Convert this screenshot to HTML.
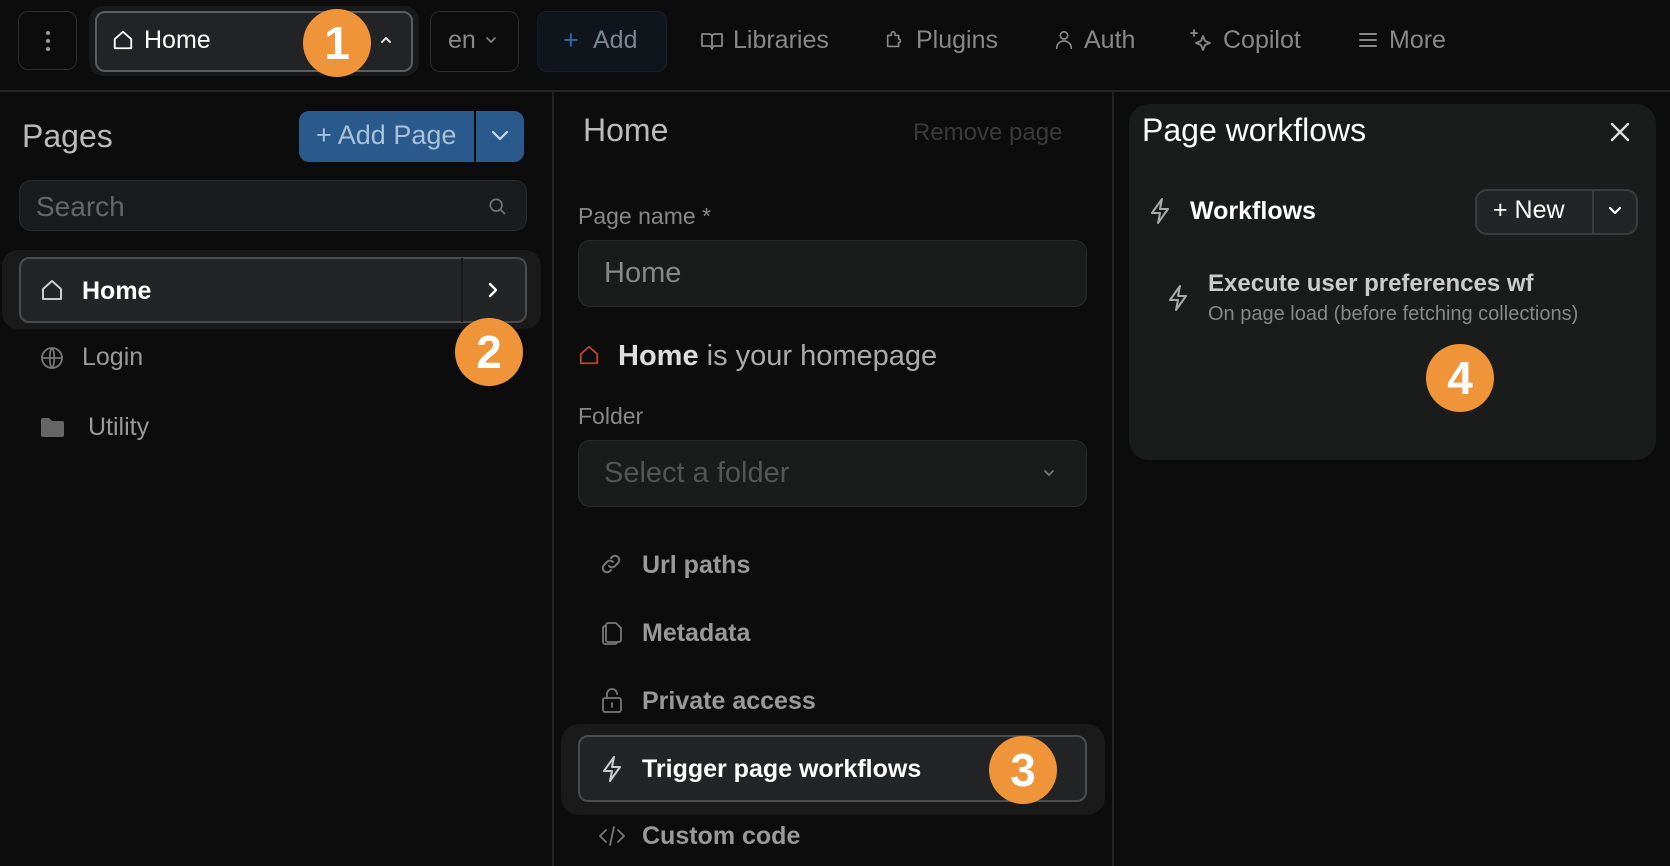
<!DOCTYPE html>
<html><head><meta charset="utf-8"><style>
*{box-sizing:border-box;margin:0;padding:0}
body{width:1670px;height:866px;background:#0c0c0c;font-family:"Liberation Sans",sans-serif;position:relative;overflow:hidden;color:#999}
.a{position:absolute}
.t{position:absolute;white-space:nowrap;line-height:1}
svg{position:absolute;fill:none;stroke-linecap:round;stroke-linejoin:round}
.badge{position:absolute;width:68px;height:68px;border-radius:50%;background:#f0943a;color:#fff;font-weight:bold;font-size:46px;text-align:center;line-height:68px;margin:-34px 0 0 -34px}
</style></head><body>
<!-- top bar -->
<div class="a" style="left:0;top:90px;width:1670px;height:2px;background:#262626"></div>
<div class="a" style="left:18px;top:11px;width:59px;height:59px;border:1.5px solid #2c2c2c;border-radius:10px"></div>
<div class="a" style="left:46px;top:31px;width:4px;height:4px;border-radius:2px;background:#999;box-shadow:0 8px 0 #999,0 16px 0 #999"></div>
<div class="a" style="left:89px;top:6px;width:330px;height:70px;border-radius:14px;background:#18191a"></div>
<div class="a" style="left:95px;top:11px;width:318px;height:61px;border:2px solid #5a5d60;border-radius:10px;background:#222324"></div>
<svg style="left:112px;top:29px" width="22" height="22" viewBox="0 0 24 24" stroke="#fff" stroke-width="2"><path d="M3 11L12 3l9 8v10H3z"/></svg>
<div class="t" style="left:144px;top:28px;font-size:25px;color:#fff">Home</div>
<svg style="left:378px;top:34px" width="16" height="12" viewBox="0 0 16 12" stroke="#ddd" stroke-width="2"><path d="M4 8l4-4 4 4"/></svg>
<div class="badge" style="left:337px;top:43px">1</div>
<div class="a" style="left:430px;top:11px;width:89px;height:61px;border:1.5px solid #2c2c2c;border-radius:10px"></div>
<div class="t" style="left:448px;top:28px;font-size:25px;color:#888">en</div>
<svg style="left:484px;top:35px" width="14" height="10" viewBox="0 0 14 10" stroke="#888" stroke-width="1.6"><path d="M3 3l4 4 4-4"/></svg>
<div class="a" style="left:537px;top:11px;width:130px;height:61px;border:1.5px solid #17212b;border-radius:10px;background:#0f151b"></div>
<div class="t" style="left:563px;top:27px;font-size:27px;color:#2f6aa8">+</div>
<div class="t" style="left:593px;top:28px;font-size:25px;color:#7a8590">Add</div>
<svg style="left:700px;top:30px" width="24" height="22" viewBox="0 0 24 22" stroke="#888" stroke-width="1.8"><path d="M2 4h7a3 3 0 013 3v12a3 3 0 00-3-3H2zM22 4h-7a3 3 0 00-3 3v12a3 3 0 013-3h7z"/></svg>
<div class="t" style="left:733px;top:28px;font-size:25px;color:#888">Libraries</div>
<svg style="left:884px;top:29px" width="22" height="22" viewBox="0 0 24 24" stroke="#888" stroke-width="1.8"><path d="M4 7h4V5a2 2 0 014 0v2h4v4a2 2 0 010 4v4H4z"/></svg>
<div class="t" style="left:916px;top:28px;font-size:25px;color:#888">Plugins</div>
<svg style="left:1053px;top:29px" width="22" height="22" viewBox="0 0 24 24" stroke="#888" stroke-width="1.8"><circle cx="12" cy="7" r="4"/><path d="M4 21a8 8 0 0116 0"/></svg>
<div class="t" style="left:1084px;top:28px;font-size:25px;color:#888">Auth</div>
<svg style="left:1189px;top:28px" width="24" height="24" viewBox="0 0 24 24" stroke="#888" stroke-width="1.8"><path d="M14 8l2 5 5 2-5 2-2 5-2-5-5-2 5-2zM5 2v6M2 5h6"/></svg>
<div class="t" style="left:1223px;top:28px;font-size:25px;color:#888">Copilot</div>
<svg style="left:1358px;top:31px" width="20" height="18" viewBox="0 0 20 18" stroke="#888" stroke-width="2"><path d="M2 3h16M2 9h16M2 15h16"/></svg>
<div class="t" style="left:1389px;top:28px;font-size:25px;color:#888">More</div>

<!-- left panel -->
<div class="a" style="left:552px;top:91px;width:2px;height:775px;background:#222"></div>
<div class="t" style="left:22px;top:120px;font-size:32px;color:#bbb">Pages</div>
<div class="a" style="left:299px;top:111px;width:225px;height:51px;border-radius:10px;background:#2a5a8c"></div>
<div class="a" style="left:474px;top:111px;width:2px;height:51px;background:#0c0c0c"></div>
<div class="t" style="left:316px;top:122px;font-size:27px;color:#a8c0d8">+ Add Page</div>
<svg style="left:489px;top:128px" width="22" height="16" viewBox="0 0 22 16" stroke="#c8d8e8" stroke-width="2.2"><path d="M4 4l7 7 7-7"/></svg>
<div class="a" style="left:19px;top:180px;width:508px;height:51px;border:1.5px solid #2a2b2c;border-radius:12px;background:#1a1b1c"></div>
<div class="t" style="left:36px;top:193px;font-size:28px;color:#666">Search</div>
<svg style="left:487px;top:196px" width="20" height="20" viewBox="0 0 24 24" stroke="#777" stroke-width="2"><circle cx="11" cy="11" r="7"/><path d="M16 16l5 5"/></svg>
<div class="a" style="left:2px;top:250px;width:539px;height:79px;border-radius:16px;background:#1a1a1a"></div>
<div class="a" style="left:19px;top:257px;width:508px;height:66px;border:2px solid #4a4c4e;border-radius:10px;background:#232426"></div>
<div class="a" style="left:461px;top:258px;width:2px;height:64px;background:#18191a"></div>
<svg style="left:40px;top:278px" width="24" height="24" viewBox="0 0 24 24" stroke="#ccc" stroke-width="2"><path d="M3 11L12 3l9 8v10H3z"/></svg>
<div class="t" style="left:82px;top:279px;font-size:25px;color:#fff;font-weight:bold">Home</div>
<svg style="left:486px;top:282px" width="14" height="16" viewBox="0 0 14 16" stroke="#fff" stroke-width="2.4"><path d="M4 2l6 6-6 6"/></svg>
<div class="badge" style="left:489px;top:352px">2</div>
<svg style="left:40px;top:346px" width="24" height="24" viewBox="0 0 24 24" stroke="#777" stroke-width="1.8"><circle cx="12" cy="12" r="10"/><path d="M2 12h20M12 2c3 3 3 17 0 20M12 2c-3 3-3 17 0 20"/></svg>
<div class="t" style="left:82px;top:345px;font-size:25px;color:#999">Login</div>
<svg style="left:40px;top:417px" width="25" height="22" viewBox="0 0 25 22"><path d="M1 3a2 2 0 012-2h6l3 3h10a2 2 0 012 2v12a2 2 0 01-2 2H3a2 2 0 01-2-2z" fill="#666"/></svg>
<div class="t" style="left:88px;top:415px;font-size:25px;color:#999">Utility</div>

<!-- middle panel -->
<div class="a" style="left:1112px;top:91px;width:2px;height:775px;background:#222"></div>
<div class="t" style="left:583px;top:114px;font-size:32px;color:#bbb">Home</div>
<div class="t" style="left:913px;top:121px;font-size:24px;color:#3a3a3a">Remove page</div>
<div class="t" style="left:578px;top:205px;font-size:23px;color:#888">Page name *</div>
<div class="a" style="left:578px;top:240px;width:509px;height:67px;border:1.5px solid #2c2c2c;border-radius:12px;background:#1a1b1b"></div>
<div class="t" style="left:604px;top:259px;font-size:29px;color:#888">Home</div>
<svg style="left:578px;top:344px" width="22" height="22" viewBox="0 0 24 24" stroke="#c0442a" stroke-width="2"><path d="M3 11L12 3l9 8v10H3z"/></svg>
<div class="t" style="left:618px;top:342px;font-size:29px;color:#aaa"><b style="color:#ddd">Home</b> is your homepage</div>
<div class="t" style="left:578px;top:405px;font-size:23px;color:#888">Folder</div>
<div class="a" style="left:578px;top:440px;width:509px;height:67px;border:1.5px solid #2c2c2c;border-radius:12px;background:#1a1b1b"></div>
<div class="t" style="left:604px;top:459px;font-size:29px;color:#555">Select a folder</div>
<svg style="left:1042px;top:468px" width="14" height="10" viewBox="0 0 14 10" stroke="#777" stroke-width="1.8"><path d="M3 3l4 4 4-4"/></svg>
<svg style="left:599px;top:552px" width="24" height="24" viewBox="0 0 24 24" stroke="#777" stroke-width="2"><path d="M10 14a4 4 0 006 0l3-3a4 4 0 00-6-6l-1 1M14 10a4 4 0 00-6 0l-3 3a4 4 0 006 6l1-1"/></svg>
<div class="t" style="left:642px;top:553px;font-size:25px;color:#999;font-weight:bold">Url paths</div>
<svg style="left:600px;top:620px" width="24" height="26" viewBox="0 0 24 26" stroke="#777" stroke-width="1.8"><path d="M8 3h8l5 5v12a2 2 0 01-2 2H8a2 2 0 01-2-2V5a2 2 0 012-2zM6 6H5a2 2 0 00-2 2v14a2 2 0 002 2h10a2 2 0 002-2"/></svg>
<div class="t" style="left:642px;top:621px;font-size:25px;color:#999;font-weight:bold">Metadata</div>
<svg style="left:600px;top:687px" width="24" height="27" viewBox="0 0 24 27" stroke="#777" stroke-width="1.8"><rect x="3" y="11" width="18" height="14" rx="2"/><path d="M7 11V7a5 5 0 0110 0M12 16v4"/></svg>
<div class="t" style="left:642px;top:689px;font-size:25px;color:#999;font-weight:bold">Private access</div>
<div class="a" style="left:561px;top:724px;width:544px;height:91px;border-radius:18px;background:#1a1a1a"></div>
<div class="a" style="left:578px;top:735px;width:509px;height:67px;border:2px solid #4a4c4e;border-radius:10px;background:#232426"></div>
<svg style="left:600px;top:755px" width="24" height="28" viewBox="0 0 24 28" stroke="#ccc" stroke-width="2"><path d="M14 2L4 16h8l-2 10 10-14h-8z"/></svg>
<div class="t" style="left:642px;top:757px;font-size:25px;color:#fff;font-weight:bold">Trigger page workflows</div>
<div class="badge" style="left:1023px;top:770px">3</div>
<svg style="left:598px;top:825px" width="28" height="22" viewBox="0 0 28 22" stroke="#777" stroke-width="1.8"><path d="M8 5l-6 6 6 6M20 5l6 6-6 6M16 2l-4 18"/></svg>
<div class="t" style="left:642px;top:824px;font-size:25px;color:#999;font-weight:bold">Custom code</div>

<!-- right panel -->
<div class="a" style="left:1129px;top:104px;width:527px;height:356px;border-radius:20px;background:#1a1b1b"></div>
<div class="t" style="left:1142px;top:114px;font-size:32px;color:#fff">Page workflows</div>
<svg style="left:1608px;top:120px" width="24" height="24" viewBox="0 0 24 24" stroke="#ddd" stroke-width="2.4"><path d="M4 4l16 16M20 4L4 20"/></svg>
<svg style="left:1148px;top:197px" width="24" height="28" viewBox="0 0 24 28" stroke="#aaa" stroke-width="2"><path d="M14 2L4 16h8l-2 10 10-14h-8z"/></svg>
<div class="t" style="left:1190px;top:199px;font-size:25px;color:#fff;font-weight:bold">Workflows</div>
<div class="a" style="left:1475px;top:189px;width:163px;height:46px;border:2px solid #3a3c3e;border-radius:12px;background:#232426"></div>
<div class="a" style="left:1592px;top:190px;width:2px;height:44px;background:#3a3c3e"></div>
<div class="t" style="left:1493px;top:198px;font-size:25px;color:#fff">+ New</div>
<svg style="left:1607px;top:205px" width="16" height="12" viewBox="0 0 16 12" stroke="#fff" stroke-width="2.2"><path d="M3 3l5 5 5-5"/></svg>
<svg style="left:1166px;top:284px" width="24" height="28" viewBox="0 0 24 28" stroke="#aaa" stroke-width="2"><path d="M14 2L4 16h8l-2 10 10-14h-8z"/></svg>
<div class="t" style="left:1208px;top:272px;font-size:24px;color:#ccc;font-weight:bold">Execute user preferences wf</div>
<div class="t" style="left:1208px;top:304px;font-size:20px;color:#888">On page load (before fetching collections)</div>
<div class="badge" style="left:1460px;top:378px">4</div>
</body></html>
